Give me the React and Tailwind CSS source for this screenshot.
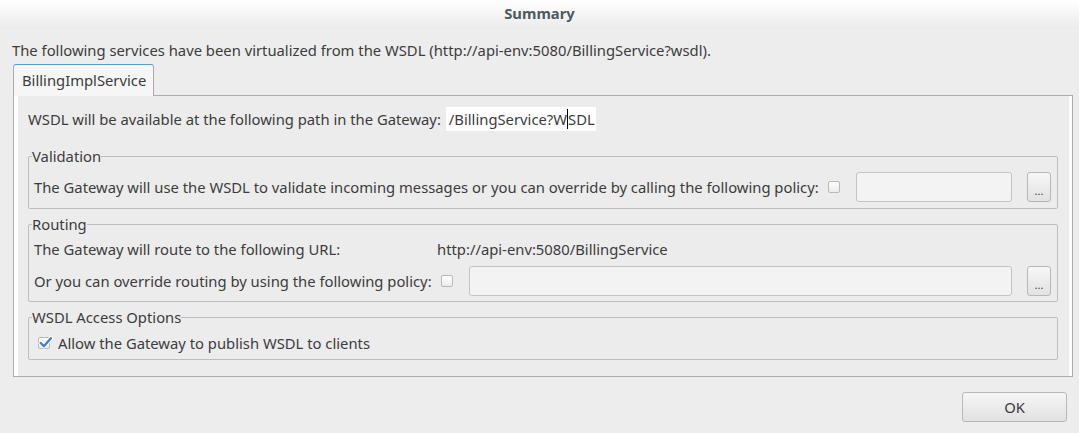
import React from 'react'

function Checkbox({ checked = false }) {
  return (
    <span className="relative inline-block w-[12px] h-[12px] shrink-0 rounded-[2px] border border-[#b9bbb2] bg-gradient-to-b from-white to-[#ececec]">
      {checked && (
        <svg viewBox="0 0 14 14" className="absolute left-[-1px] top-[-3px] w-[15px] h-[15px]">
          <path d="M2.5 7.5 L5.5 10.5 L12 3" fill="none" stroke="#ffffff" strokeWidth="4" strokeLinecap="round" strokeLinejoin="round" />
          <path d="M2.5 7.5 L5.5 10.5 L12 3" fill="none" stroke="#3f7fd0" strokeWidth="2.2" strokeLinecap="round" strokeLinejoin="round" />
        </svg>
      )}
    </span>
  )
}

function Field({ className = '' }) {
  return <div className={`h-[30px] rounded-[3px] border border-[#c3c3c3] bg-[#f3f3f3] ${className}`} />
}

function DotsButton() {
  return (
    <button className="ml-[15px] w-[24px] h-[30px] shrink-0 rounded-[3px] border border-[#b7b7b7] bg-gradient-to-b from-[#f7f7f7] to-[#e2e2e2] text-[11px] leading-none pt-[6px] text-[#3c3c3c]">
      ...
    </button>
  )
}

function Group({ title, children, className = '' }) {
  return (
    <fieldset className={`ml-[10px] mr-[11px] border border-[#bdbdbd] rounded-[2px] ${className}`}>
      <legend className="ml-[3px] px-0 leading-[18px]">{title}</legend>
      {children}
    </fieldset>
  )
}

export default function App() {
  return (
    <div
      className="w-[1079px] h-[433px] bg-[#ededed] flex flex-col text-[14.8px] text-[#3c3c3c]"
      style={{ fontFamily: '"Noto Sans", "Open Sans", sans-serif' }}
    >
      {/* Title bar */}
      <div className="h-[28px] shrink-0 flex items-center justify-center bg-gradient-to-b from-white to-[#ececec] pb-[1px]">
        <span className="font-bold text-[#4d5a5f]">Summary</span>
      </div>

      <p className="mt-[12px] px-[12px] leading-[20px]">
        The following services have been virtualized from the WSDL (http://api-env:5080/BillingService?wsdl).
      </p>

      {/* Tab */}
      <div className="mt-[4px] ml-[13px] flex">
        <div className="relative z-10 w-[141px] h-[32px] -mb-[1px] rounded-t-[3px] border border-[#ababab] border-t-[#5f97d6] border-b-0 bg-[#f6f6f6] flex items-center pl-[8px] pb-[1px]">
          BillingImplService
        </div>
      </div>

      {/* Panel */}
      <div className="ml-[13px] mr-[6px] h-[282px] border border-[#acacac] bg-white pl-[4px] pr-[3px]">
        <div className="h-full bg-[#ececec] flex flex-col">
          <div className="pt-[11px] pl-[10px] flex items-center h-[35px]">
            <span>WSDL will be available at the following path in the Gateway:</span>
            <span className="ml-[5px] h-[24px] w-[150px] bg-white flex items-center pl-[3px]">
              /BillingService?W
              <span className="inline-block w-[1px] h-[20px] bg-black" />
              SDL
            </span>
          </div>

          <Group title="Validation" className="mt-[16px]">
            <div className="pt-[7px] pb-[6px] pl-[5px] pr-[6px] flex items-center">
              <span>The Gateway will use the WSDL to validate incoming messages or you can override by calling the following policy:</span>
              <span className="ml-[9px]"><Checkbox /></span>
              <Field className="ml-[16px] flex-1" />
              <DotsButton />
            </div>
          </Group>

          <Group title="Routing" className="mt-[6px]">
            <div className="pt-[6px] pb-[5px] pl-[5px] pr-[6px] flex flex-col gap-[7px]">
              <div className="flex items-center h-[20px]">
                <span className="w-[403px]">The Gateway will route to the following URL:</span>
                <span>http://api-env:5080/BillingService</span>
              </div>
              <div className="flex items-center">
                <span>Or you can override routing by using the following policy:</span>
                <span className="ml-[9px]"><Checkbox /></span>
                <Field className="ml-[16px] flex-1" />
                <DotsButton />
              </div>
            </div>
          </Group>

          <Group title="WSDL Access Options" className="mt-[6px]">
            <div className="pt-[7px] pb-[6px] pl-[9px] flex items-center h-[33px]">
              <Checkbox checked />
              <span className="ml-[8px]">Allow the Gateway to publish WSDL to clients</span>
            </div>
          </Group>
        </div>
      </div>

      <div className="flex justify-end pr-[12px] mt-[15px]">
        <button className="w-[105px] h-[30px] rounded-[3px] border border-[#b8b8b8] bg-gradient-to-b from-[#f6f6f6] to-[#e1e1e1] text-[#3c3c3c]">
          OK
        </button>
      </div>
    </div>
  )
}
